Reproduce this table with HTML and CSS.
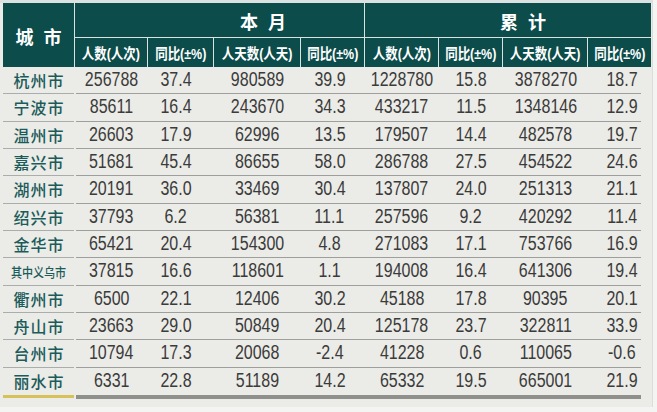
FILE: index.html
```html
<!DOCTYPE html>
<html lang="zh-CN">
<head>
<meta charset="utf-8">
<title>城市统计</title>
<link rel="stylesheet" href="styles.css">
</head>
<body>
<div class="sheet">
  <div class="head">
    <div class="h-city"><span>城市</span></div>
    <div class="h-group h-month"><span>本月</span></div>
    <div class="h-group h-total"><span>累计</span></div>
    <div class="h-sub"><span>人数(人次)</span></div>
    <div class="h-sub"><span>同比(±%)</span></div>
    <div class="h-sub"><span>人天数(人天)</span></div>
    <div class="h-sub"><span>同比(±%)</span></div>
    <div class="h-sub"><span>人数(人次)</span></div>
    <div class="h-sub"><span>同比(±%)</span></div>
    <div class="h-sub"><span>人天数(人天)</span></div>
    <div class="h-sub"><span>同比(±%)</span></div>
  </div>
  <div class="body">
    <div class="row"><div class="city">杭州市</div><div class="vals"><div><span>256788</span></div><div><span>37.4</span></div><div><span>980589</span></div><div><span>39.9</span></div><div><span>1228780</span></div><div><span>15.8</span></div><div><span>3878270</span></div><div><span>18.7</span></div></div></div>
    <div class="row"><div class="city">宁波市</div><div class="vals"><div><span>85611</span></div><div><span>16.4</span></div><div><span>243670</span></div><div><span>34.3</span></div><div><span>433217</span></div><div><span>11.5</span></div><div><span>1348146</span></div><div><span>12.9</span></div></div></div>
    <div class="row"><div class="city">温州市</div><div class="vals"><div><span>26603</span></div><div><span>17.9</span></div><div><span>62996</span></div><div><span>13.5</span></div><div><span>179507</span></div><div><span>14.4</span></div><div><span>482578</span></div><div><span>19.7</span></div></div></div>
    <div class="row"><div class="city">嘉兴市</div><div class="vals"><div><span>51681</span></div><div><span>45.4</span></div><div><span>86655</span></div><div><span>58.0</span></div><div><span>286788</span></div><div><span>27.5</span></div><div><span>454522</span></div><div><span>24.6</span></div></div></div>
    <div class="row"><div class="city">湖州市</div><div class="vals"><div><span>20191</span></div><div><span>36.0</span></div><div><span>33469</span></div><div><span>30.4</span></div><div><span>137807</span></div><div><span>24.0</span></div><div><span>251313</span></div><div><span>21.1</span></div></div></div>
    <div class="row"><div class="city">绍兴市</div><div class="vals"><div><span>37793</span></div><div><span>6.2</span></div><div><span>56381</span></div><div><span>11.1</span></div><div><span>257596</span></div><div><span>9.2</span></div><div><span>420292</span></div><div><span>11.4</span></div></div></div>
    <div class="row"><div class="city">金华市</div><div class="vals"><div><span>65421</span></div><div><span>20.4</span></div><div><span>154300</span></div><div><span>4.8</span></div><div><span>271083</span></div><div><span>17.1</span></div><div><span>753766</span></div><div><span>16.9</span></div></div></div>
    <div class="row"><div class="city city-sub"><span>其中义乌市</span></div><div class="vals"><div><span>37815</span></div><div><span>16.6</span></div><div><span>118601</span></div><div><span>1.1</span></div><div><span>194008</span></div><div><span>16.4</span></div><div><span>641306</span></div><div><span>19.4</span></div></div></div>
    <div class="row"><div class="city">衢州市</div><div class="vals"><div><span>6500</span></div><div><span>22.1</span></div><div><span>12406</span></div><div><span>30.2</span></div><div><span>45188</span></div><div><span>17.8</span></div><div><span>90395</span></div><div><span>20.1</span></div></div></div>
    <div class="row"><div class="city">舟山市</div><div class="vals"><div><span>23663</span></div><div><span>29.0</span></div><div><span>50849</span></div><div><span>20.4</span></div><div><span>125178</span></div><div><span>23.7</span></div><div><span>322811</span></div><div><span>33.9</span></div></div></div>
    <div class="row"><div class="city">台州市</div><div class="vals"><div><span>10794</span></div><div><span>17.3</span></div><div><span>20068</span></div><div><span>-2.4</span></div><div><span>41228</span></div><div><span>0.6</span></div><div><span>110065</span></div><div><span>-0.6</span></div></div></div>
    <div class="row row-last"><div class="city">丽水市</div><div class="vals"><div><span>6331</span></div><div><span>22.8</span></div><div><span>51189</span></div><div><span>14.2</span></div><div><span>65332</span></div><div><span>19.5</span></div><div><span>665001</span></div><div><span>21.9</span></div></div></div>
  </div>
  <div class="foot">
    <div class="bar-y"></div>
    <div class="bar-g"></div>
  </div>
</div>
</body>
</html>
```

FILE: styles.css
```css
html, body {
  margin: 0;
  padding: 0;
}
body {
  background: #f4f4f2;
  width: 657px;
  height: 412px;
  overflow: hidden;
  font-family: "Noto Sans CJK SC", sans-serif;
}
.sheet {
  box-sizing: border-box;
  width: 653px;
  height: 407px;
  background: #ebebe7;
  border-top: 3px solid #dce1e1;
  border-right: 1px solid #dcdcda;
  padding-left: 3px;
}
.head {
  display: grid;
  grid-template-columns: 71px 72px 65px 86px 63px 73px 63px 84px 63px;
  grid-template-rows: 34px 29px;
  gap: 1px;
  width: 648px;
  background: #d9e4e2;
}
.head > div {
  background: #0c4c4b;
  color: #ffffff;
  display: flex;
  align-items: center;
  justify-content: center;
}
.h-city {
  grid-row: 1 / 3;
  grid-column: 1;
  font-size: 18px;
  font-weight: 700;
  letter-spacing: 10px;
}
.h-city span {
  margin-left: 10px;
  margin-top: 1px;
}
.h-group {
  font-size: 18px;
  font-weight: 700;
  letter-spacing: 10px;
}
.head > .h-group {
  justify-content: flex-start;
  padding-top: 2px;
}
.h-month {
  grid-column: 2 / 6;
  padding-left: 165px;
}
.h-total {
  grid-column: 6 / 10;
  padding-left: 135px;
}
.h-sub {
  grid-row: 2;
  font-size: 14.5px;
  font-weight: 700;
  white-space: nowrap;
}
.h-sub span {
  display: inline-block;
  transform: scaleX(0.86);
  font-family: "Liberation Sans", "Noto Sans CJK SC", sans-serif;
}
.body {
  display: grid;
  grid-template-rows: repeat(12, 1fr);
  height: 328px;
}
.row {
  display: flex;
  column-gap: 2px;
}
.city {
  box-sizing: border-box;
  width: 71px;
  display: flex;
  align-items: center;
  justify-content: center;
  border-bottom: 1px solid #a9adab;
  color: #1b5b5a;
  font-size: 16px;
  font-weight: 500;
  letter-spacing: 1px;
  padding-left: 1px;
}
.city-sub span {
  display: inline-block;
  font-size: 13px;
  letter-spacing: 0;
  transform: scaleX(0.85);
}
.vals {
  box-sizing: border-box;
  width: 565px;
  display: grid;
  grid-template-columns: 71px 67px 87px 64px 74px 64px 85px 53px;
  border-bottom: 1px solid #9e9e9c;
  font-family: "Liberation Sans", sans-serif;
  font-size: 19.5px;
  color: #3b3b3b;
}
.vals > div {
  display: flex;
  align-items: center;
  justify-content: center;
  padding-bottom: 1px;
  white-space: nowrap;
}
.vals span {
  display: inline-block;
  transform: scaleX(0.82);
}
.vals > div:nth-child(2) {
  padding-right: 9px;
}
.vals > div:nth-child(4) {
  padding-right: 7px;
}
.vals > div:nth-child(8) {
  padding-left: 15px;
}
.row-last .city,
.row-last .vals {
  border-bottom: none;
}
.foot {
  display: flex;
  column-gap: 2px;
  align-items: flex-start;
}
.bar-y {
  width: 71px;
  height: 3px;
  background: #d6c258;
}
.bar-g {
  width: 565px;
  height: 4px;
  background: #8f8f8c;
}
```
